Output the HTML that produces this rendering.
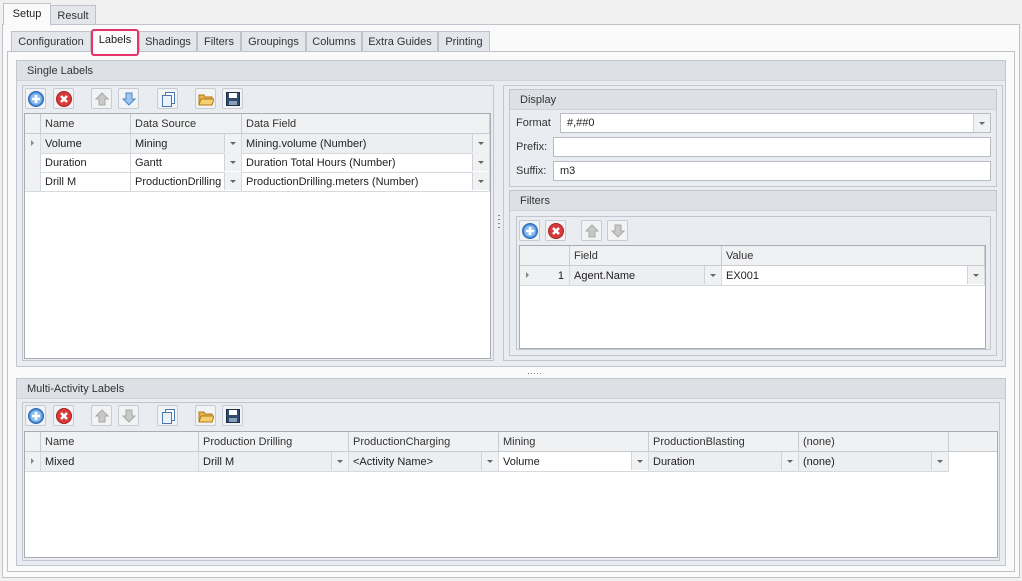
<!DOCTYPE html>
<html><head><meta charset="utf-8"><style>
*{box-sizing:border-box;margin:0;padding:0}
body{width:1022px;height:581px;background:#f0f0f0;font-family:"Liberation Sans",sans-serif;font-size:11px;color:#1e1e1e;position:relative;overflow:hidden}
.a{position:absolute}
.tab{position:absolute;border:1px solid #bfc3c9;border-bottom:none;background:#e3e6ea;color:#333;text-align:center;line-height:21px}
.grp{position:absolute;border:1px solid #c3c7cd;background:#e9ecf0}
.gh{position:absolute;left:0;right:0;top:0;height:20px;background:#dde0e5;border-bottom:1px solid #d0d3d8;padding-left:10px;line-height:20px;color:#333}
.pan{position:absolute;border:1px solid #c3c7cd;background:#e9ecf0}
.btn{position:absolute;width:21px;height:21px;border:1px solid #c8cbd1;border-radius:2px;background:#f2f3f5}
.btn svg{position:absolute;left:2px;top:2px}
.grid{position:absolute;border:1px solid #a9adb3;background:#fff}
.c{position:absolute;height:20px;line-height:20px;padding-left:4px;border-right:1px solid #d6d9de;border-bottom:1px solid #d6d9de;white-space:nowrap;overflow:hidden}
.hd{background:#f0f1f3;color:#333;border-color:#c8cbd0}
.ind{background:#f0f1f3}
.dd{position:absolute;width:17px;height:18px;top:0;right:0;border-left:1px solid #d0d3d8;background:#f0f1f3}
.dd:after{content:"";position:absolute;left:5px;top:8px;border-left:3.5px solid transparent;border-right:3.5px solid transparent;border-top:3.5px solid #666}
.tri{position:absolute;left:6px;top:6px;border-top:3.5px solid transparent;border-bottom:3.5px solid transparent;border-left:3.5px solid #888}
.inp{position:absolute;height:20px;border:1px solid #b9bdc3;background:#fff;line-height:19px;padding-left:6px}
.lbl{position:absolute;color:#333}
</style></head><body>
<svg width="0" height="0" style="position:absolute"><defs>
<g id="add"><circle cx="8" cy="8" r="7.5" fill="#3f86d4" stroke="#2f6db5"/><circle cx="8" cy="8" r="5.8" fill="#8cbcec"/><path d="M8 4v8M4 8h8" stroke="#fff" stroke-width="2.6"/></g>
<g id="del"><circle cx="8" cy="8" r="7.5" fill="#d63a3a" stroke="#a52222"/><path d="M5 5l6 6M11 5l-6 6" stroke="#fff" stroke-width="2.6"/></g>
<g id="up"><path d="M8 2l6 6h-3v6h-6v-6h-3z" fill="#c9c9c9" stroke="#a8a8a8"/></g>
<g id="dn"><path d="M8 14l6-6h-3v-6h-6v6h-3z" fill="#9cc6ef" stroke="#4b86c6"/></g>
<g id="dng"><path d="M8 14l6-6h-3v-6h-6v6h-3z" fill="#c9c9c9" stroke="#a8a8a8"/></g>
<g id="cp"><rect x="5.5" y="1.5" width="9" height="11" fill="#fff" stroke="#4b76b0"/><rect x="2.5" y="4.5" width="9" height="11" fill="#eaf2fb" stroke="#4b76b0"/></g>
<g id="fo"><path d="M1 4h5l1 2h7v8H1z" fill="#e7b24c" stroke="#b07a1c"/><path d="M3 8h13l-2 6H1z" fill="#f6cf6f" stroke="#b07a1c"/></g>
<g id="sv"><rect x="1.5" y="1.5" width="13" height="13" fill="#2f4a6b" stroke="#1c2f47"/><rect x="4" y="2" width="8" height="5" fill="#fff"/><rect x="4" y="10" width="8" height="4" fill="#8aa0b8"/></g>
</defs></svg>

<div class="a" style="left:2px;top:24px;width:1018px;height:554px;border:1px solid #bfc3c9;background:#fafafa"></div>
<div class="tab" style="left:3px;top:3px;width:48px;height:22px;background:#fafafa;color:#222">Setup</div>
<div class="tab" style="left:50px;top:5px;width:46px;height:19px;line-height:20px">Result</div>

<div class="a" style="left:7px;top:51px;width:1008px;height:521px;border:1px solid #bfc3c9;background:#fafafa"></div>
<div class="tab" style="left:11px;top:31px;width:80px;height:20px">Configuration</div>
<div class="tab" style="left:139px;top:31px;width:58px;height:20px">Shadings</div>
<div class="tab" style="left:197px;top:31px;width:44px;height:20px">Filters</div>
<div class="tab" style="left:241px;top:31px;width:65px;height:20px">Groupings</div>
<div class="tab" style="left:306px;top:31px;width:56px;height:20px">Columns</div>
<div class="tab" style="left:362px;top:31px;width:76px;height:20px">Extra Guides</div>
<div class="tab" style="left:438px;top:31px;width:52px;height:20px">Printing</div>
<div class="a" style="left:91px;top:29px;width:48px;height:27px;border:2px solid #e8336a;border-radius:3px;background:#fafafa;text-align:center;line-height:19px;color:#222">Labels</div>

<div class="grp" style="left:16px;top:60px;width:990px;height:307px"><div class="gh">Single Labels</div></div>
<div class="pan" style="left:22px;top:85px;width:472px;height:276px"></div>
<div class="btn" style="left:25px;top:88px"><svg width="16" height="16"><use href="#add"/></svg></div>
<div class="btn" style="left:53px;top:88px"><svg width="16" height="16"><use href="#del"/></svg></div>
<div class="btn" style="left:91px;top:88px"><svg width="16" height="16"><use href="#up"/></svg></div>
<div class="btn" style="left:118px;top:88px"><svg width="16" height="16"><use href="#dn"/></svg></div>
<div class="btn" style="left:157px;top:88px"><svg width="16" height="16"><use href="#cp"/></svg></div>
<div class="btn" style="left:195px;top:88px"><svg width="16" height="16"><use href="#fo"/></svg></div>
<div class="btn" style="left:222px;top:88px"><svg width="16" height="16"><use href="#sv"/></svg></div>
<div class="grid" style="left:24px;top:113px;width:467px;height:246px">
 <div class="c hd" style="left:0;top:0;width:16px"></div>
 <div class="c hd" style="left:16px;top:0;width:90px">Name</div>
 <div class="c hd" style="left:106px;top:0;width:111px">Data Source</div>
 <div class="c hd" style="left:217px;top:0;width:248px">Data Field</div>
 <div class="c ind" style="left:0;top:20px;width:16px"><div class="tri"></div></div>
 <div class="c" style="left:16px;top:20px;width:90px;background:#eceef1">Volume</div>
 <div class="c" style="left:106px;top:20px;width:111px;background:#eceef1">Mining<div class="dd"></div></div>
 <div class="c" style="left:217px;top:20px;width:248px;background:#eceef1">Mining.volume (Number)<div class="dd"></div></div>
 <div class="c ind" style="left:0;top:39px;width:16px"></div>
 <div class="c" style="left:16px;top:39px;width:90px">Duration</div>
 <div class="c" style="left:106px;top:39px;width:111px">Gantt<div class="dd"></div></div>
 <div class="c" style="left:217px;top:39px;width:248px">Duration Total Hours (Number)<div class="dd"></div></div>
 <div class="c ind" style="left:0;top:58px;width:16px"></div>
 <div class="c" style="left:16px;top:58px;width:90px">Drill M</div>
 <div class="c" style="left:106px;top:58px;width:111px">ProductionDrilling<div class="dd"></div></div>
 <div class="c" style="left:217px;top:58px;width:248px">ProductionDrilling.meters (Number)<div class="dd"></div></div>
</div>
<div class="a" style="left:498px;top:215px;width:2px;height:16px;background:repeating-linear-gradient(#888 0 1px,transparent 1px 4px)"></div>

<div class="pan" style="left:503px;top:85px;width:500px;height:276px"></div>
<div class="grp" style="left:509px;top:89px;width:488px;height:98px"><div class="gh">Display</div></div>
<div class="lbl" style="left:516px;top:117px">Format</div>
<div class="inp" style="left:560px;top:113px;width:431px">#,##0<div class="dd" style="height:18px"></div></div>
<div class="lbl" style="left:516px;top:141px">Prefix:</div>
<div class="inp" style="left:553px;top:137px;width:438px"></div>
<div class="lbl" style="left:516px;top:165px">Suffix:</div>
<div class="inp" style="left:553px;top:161px;width:438px">m3</div>
<div class="grp" style="left:509px;top:190px;width:488px;height:166px"><div class="gh">Filters</div></div>
<div class="pan" style="left:516px;top:216px;width:475px;height:134px"></div>
<div class="btn" style="left:519px;top:220px"><svg width="16" height="16"><use href="#add"/></svg></div>
<div class="btn" style="left:545px;top:220px"><svg width="16" height="16"><use href="#del"/></svg></div>
<div class="btn" style="left:581px;top:220px"><svg width="16" height="16"><use href="#up"/></svg></div>
<div class="btn" style="left:607px;top:220px"><svg width="16" height="16"><use href="#dng"/></svg></div>
<div class="grid" style="left:519px;top:245px;width:467px;height:104px">
 <div class="c hd" style="left:0;top:0;width:50px"></div>
 <div class="c hd" style="left:50px;top:0;width:152px">Field</div>
 <div class="c hd" style="left:202px;top:0;width:263px">Value</div>
 <div class="c ind" style="left:0;top:20px;width:50px;text-align:right;padding-right:5px"><div class="tri"></div>1</div>
 <div class="c" style="left:50px;top:20px;width:152px;background:#eceef1">Agent.Name<div class="dd"></div></div>
 <div class="c" style="left:202px;top:20px;width:263px">EX001<div class="dd"></div></div>
</div>
<div class="a" style="left:528px;top:373px;width:13px;height:1px;background:repeating-linear-gradient(90deg,#888 0 1px,transparent 1px 3px)"></div>

<div class="grp" style="left:16px;top:378px;width:990px;height:188px"><div class="gh">Multi-Activity Labels</div></div>
<div class="pan" style="left:22px;top:402px;width:978px;height:159px"></div>
<div class="btn" style="left:25px;top:405px"><svg width="16" height="16"><use href="#add"/></svg></div>
<div class="btn" style="left:53px;top:405px"><svg width="16" height="16"><use href="#del"/></svg></div>
<div class="btn" style="left:91px;top:405px"><svg width="16" height="16"><use href="#up"/></svg></div>
<div class="btn" style="left:118px;top:405px"><svg width="16" height="16"><use href="#dng"/></svg></div>
<div class="btn" style="left:157px;top:405px"><svg width="16" height="16"><use href="#cp"/></svg></div>
<div class="btn" style="left:195px;top:405px"><svg width="16" height="16"><use href="#fo"/></svg></div>
<div class="btn" style="left:222px;top:405px"><svg width="16" height="16"><use href="#sv"/></svg></div>
<div class="grid" style="left:24px;top:431px;width:974px;height:127px">
 <div class="c hd" style="left:0;top:0;width:16px"></div>
 <div class="c hd" style="left:16px;top:0;width:158px">Name</div>
 <div class="c hd" style="left:174px;top:0;width:150px">Production Drilling</div>
 <div class="c hd" style="left:324px;top:0;width:150px">ProductionCharging</div>
 <div class="c hd" style="left:474px;top:0;width:150px">Mining</div>
 <div class="c hd" style="left:624px;top:0;width:150px">ProductionBlasting</div>
 <div class="c hd" style="left:774px;top:0;width:150px">(none)</div>
 <div class="c hd" style="left:924px;top:0;width:48px;border-right:none"></div>
 <div class="c ind" style="left:0;top:20px;width:16px"><div class="tri"></div></div>
 <div class="c" style="left:16px;top:20px;width:158px;background:#eceef1">Mixed</div>
 <div class="c" style="left:174px;top:20px;width:150px;background:#eceef1">Drill M<div class="dd"></div></div>
 <div class="c" style="left:324px;top:20px;width:150px;background:#eceef1">&lt;Activity Name&gt;<div class="dd"></div></div>
 <div class="c" style="left:474px;top:20px;width:150px">Volume<div class="dd"></div></div>
 <div class="c" style="left:624px;top:20px;width:150px;background:#eceef1">Duration<div class="dd"></div></div>
 <div class="c" style="left:774px;top:20px;width:150px;background:#eceef1">(none)<div class="dd"></div></div>
</div>
</body></html>
